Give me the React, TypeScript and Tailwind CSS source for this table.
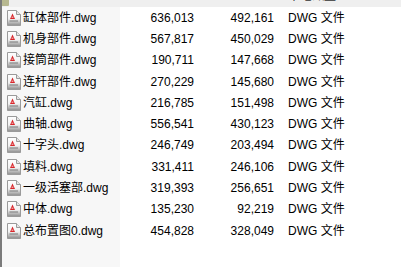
import React from 'react'

const files = [
  { name: '缸体部件.dwg', size: '636,013', packed: '492,161' },
  { name: '机身部件.dwg', size: '567,817', packed: '450,029' },
  { name: '接筒部件.dwg', size: '190,711', packed: '147,668' },
  { name: '连杆部件.dwg', size: '270,229', packed: '145,680' },
  { name: '汽缸.dwg', size: '216,785', packed: '151,498' },
  { name: '曲轴.dwg', size: '556,541', packed: '430,123' },
  { name: '十字头.dwg', size: '246,749', packed: '203,494' },
  { name: '填料.dwg', size: '331,411', packed: '246,106' },
  { name: '一级活塞部.dwg', size: '319,393', packed: '256,651' },
  { name: '中体.dwg', size: '135,230', packed: '92,219' },
  { name: '总布置图0.dwg', size: '454,828', packed: '328,049' },
]

function DwgIcon() {
  return (
    <svg width="14" height="16" viewBox="0 0 14 16" className="shrink-0">
      <defs>
        <linearGradient id="pg" x1="0" y1="0" x2="0" y2="1">
          <stop offset="0" stopColor="#ffffff" />
          <stop offset="0.55" stopColor="#f2f2f2" />
          <stop offset="1" stopColor="#8c8c8c" />
        </linearGradient>
      </defs>
      <path d="M0.5 0.5 H9.5 L13.5 4.5 V15.5 H0.5 Z" fill="url(#pg)" stroke="#9a9a9a" />
      <path d="M9.5 0.5 V4.5 H13.5" fill="#e6e6e6" stroke="#9a9a9a" />
      <path d="M3 9 L5.5 3.5 L8 9 Z" fill="#d8262a" />
      <path d="M4.6 7.2 H6.4" stroke="#ffffff" strokeWidth="0.8" />
      <path d="M2.5 11 H11" stroke="#7a7a7a" strokeWidth="1" />
    </svg>
  )
}

export default function App() {
  return (
    <div
      className="w-[401px] h-[267px] overflow-hidden bg-white flex text-[12px] text-black"
      style={{ fontFamily: '"Liberation Sans", "Noto Sans CJK SC", sans-serif' }}
    >
      <div className="w-[2px] shrink-0 bg-[#7b7b7b]" />
      <div className="flex-1 flex flex-col">
        {/* partially scrolled-out row */}
        <div className="h-[7px] shrink-0 bg-[#efefef] flex overflow-hidden">
          <div className="w-[118px] flex items-end relative">
            <div className="absolute left-[-2px] top-[-8px] w-[9px] h-[14px] bg-[#b7b890] rounded-[1px]" />
            <span className="absolute left-[21px] top-[-11px] leading-[14px]">..</span>
          </div>
          <div className="w-[160px]" />
          <div className="relative flex-1">
            <span className="absolute left-[8px] top-[-11px] leading-[14px] text-[#333]">本地磁盘</span>
          </div>
        </div>

        {files.map(f => (
          <div key={f.name} className="h-[21.3px] shrink-0 flex items-center">
            <div className="w-[118px] h-full bg-[#f7f7f7] flex items-center gap-[2px] pl-[5px]">
              <DwgIcon />
              <span className="whitespace-nowrap">{f.name}</span>
            </div>
            <div className="w-[80px] text-right pr-[6px]">{f.size}</div>
            <div className="w-[80px] text-right pr-[6px]">{f.packed}</div>
            <div className="pl-[8px] whitespace-nowrap">DWG 文件</div>
          </div>
        ))}

        <div className="flex-1 flex">
          <div className="w-[118px] bg-[#f7f7f7]" />
        </div>
      </div>
    </div>
  )
}
